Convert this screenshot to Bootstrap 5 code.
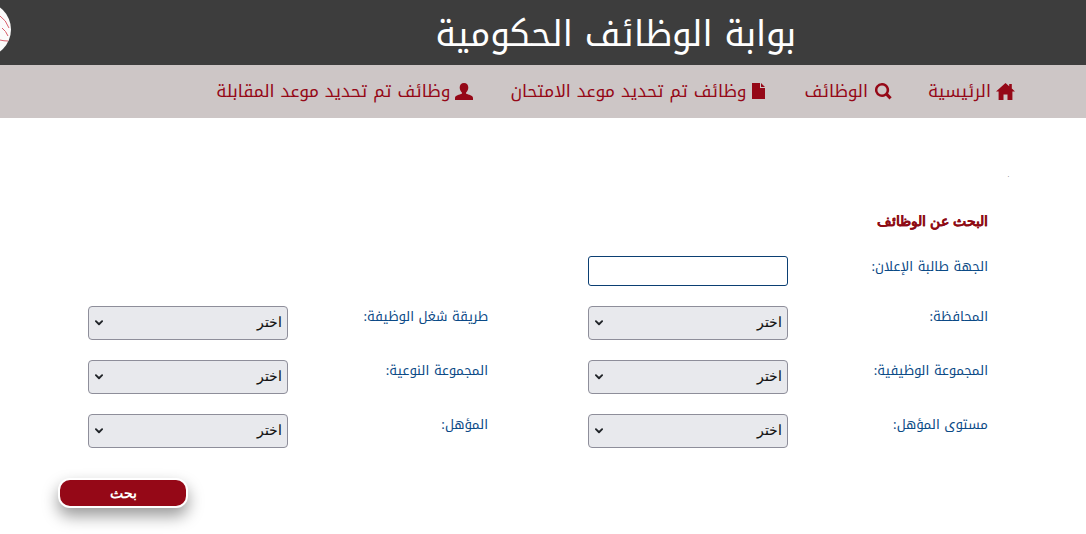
<!DOCTYPE html>
<html lang="ar" dir="rtl">
<head>
    <meta charset="utf-8">
    <title>بوابة الوظائف الحكومية</title>
    <link href="https://cdn.jsdelivr.net/npm/bootstrap@5.3.0/dist/css/bootstrap.min.css" rel="stylesheet">
    <style>
        body {
            font-family: "Noto Kufi Arabic", "DejaVu Sans", sans-serif;
            background: #fff;
            height: 534px;
            overflow: hidden;
        }
        .top-head {
            height: 65px;
            background: #3d3d3d;
            position: relative;
        }
        .top-head h1 {
            color: #fff;
            font-size: 35px;
            font-weight: 400;
            margin: 0;
            padding: 4px 290px 0 0;
            line-height: 61px;
        }
        .logo-circle {
            position: absolute;
            left: -44px;
            top: 2px;
            width: 55px;
            height: 55px;
        }
        .main-menu {
            height: 53px;
            background: #cdc6c6;
            padding-right: 71px;
            gap: 38px;
        }
        .main-menu a {
            color: #950817;
            font-size: 17.33px;
            text-decoration: none;
            display: flex;
            align-items: center;
            gap: 5px;
            white-space: nowrap;
        }
        .main-menu a:nth-child(1) {
            margin-left: -2px;
        }
        .main-menu a:nth-child(2) {
            gap: 7px;
            margin-left: 2px;
        }
        .main-menu a:nth-child(3) {
            margin-left: -1px;
        }
        .main-menu svg {
            fill: #950817;
            display: block;
        }
        .search-wrap {
            width: 900px;
            margin-right: 98px;
        }
        .stray-dot {
            height: 58px;
            font-size: 5px;
            line-height: 1;
            padding-top: 55px;
            margin-right: -21px;
            color: #333;
        }
        .search-title {
            color: #8e0b14;
            font-family: "Liberation Sans", sans-serif;
            font-size: 14px;
            font-weight: 700;
            -webkit-text-stroke: .15px #8e0b14;
            margin: 36px 0 0;
            line-height: 18px;
        }
        .form-line {
            display: flex;
            margin-top: 20px;
            height: 34px;
        }
        .first-line {
            margin-top: 26px;
            height: 30px;
        }
        .field-label {
            width: 200px;
            flex: none;
            color: #0b4a86;
            font-size: 13.33px;
            line-height: 22px;
            margin: 0;
        }
        .field-cell {
            width: 200px;
            flex: none;
        }
        .field-gap {
            width: 100px;
            flex: none;
        }
        .first-input {
            height: 30px;
            border: 1px solid #0b3f73;
            border-radius: 3px;
            padding: 0 8px;
        }
        .pick-box {
            height: 34px;
            background-color: #e8e9ed;
            background-image: url("data:image/svg+xml,%3csvg xmlns='http://www.w3.org/2000/svg' viewBox='0 0 16 16'%3e%3cpath fill='none' stroke='%23212529' stroke-linecap='round' stroke-linejoin='round' stroke-width='3' d='m3 5 5 5 5-5'/%3e%3c/svg%3e");
            border: 1px solid #8e8e9a;
            border-radius: 4px;
            color: #111;
            font-family: "Liberation Sans", sans-serif;
            font-size: 14px;
            -webkit-text-stroke: .1px #111;
            padding: 0 5px 2px 30px;
            background-position: left 5px center;
            background-size: 10px 10px;
        }
        .search-btn {
            width: 130px;
            height: 30px;
            margin: 30px 800px 0 0;
            display: block;
            background: #950817;
            color: #fff;
            border: 2px solid #fff;
            border-radius: 12px;
            font-family: "Liberation Sans", sans-serif;
            font-size: 14px;
            font-weight: 700;
            line-height: 1;
            padding: 0;
            box-shadow: 0 8px 16px rgba(0, 0, 0, .4);
        }
    </style>
</head>
<body>
    <header class="top-head">
        <h1>بوابة الوظائف الحكومية</h1>
        <svg class="logo-circle" viewBox="0 0 55 55">
            <circle cx="27.500" cy="27.500" r="27.500" fill="#fbfbfb"/>
            <path d="M44 14q6 4 9 12M46 26q4 3 6 8M44 38q4 1 8 1" fill="none" stroke="#d9606c" stroke-width="1"/>
        </svg>
    </header>

    <nav class="main-menu d-flex align-items-center">
        <a href="#">
            <svg width="19" height="17" viewBox="0 0 19 17"><path d="M9.500 0 0 8.500h2.600V17h4.900v-5.500h4V17h4.900V8.500H19L15.800 5.600V1h-2.600v2.200z"/></svg>
            الرئيسية
        </a>
        <a href="#">
            <svg width="17" height="17" viewBox="0 0 17 17"><path fill-rule="evenodd" d="M7 0a7 7 0 1 0 3.900 12.800l3.600 3.700 2.200-2.200-3.600-3.700A7 7 0 0 0 7 0zm0 2.400a4.600 4.600 0 1 1 0 9.200 4.600 4.600 0 0 1 0-9.200z"/></svg>
            الوظائف
        </a>
        <a href="#">
            <svg width="13" height="16" viewBox="0 0 13 16"><path d="M0 0h8v5h5v11H0zM9 0l4 4H9z"/></svg>
            وظائف تم تحديد موعد الامتحان
        </a>
        <a href="#">
            <svg width="18" height="17" viewBox="0 0 18 17"><path d="M9 0c2.800 0 4.300 2 4.300 4.600 0 2-.9 3.800-2.200 4.800v1.400c2.400.8 6.900 1.600 6.900 4.200v2H0v-2c0-2.600 4.500-3.400 6.900-4.200V9.400C5.600 8.400 4.700 6.600 4.700 4.600 4.700 2 6.200 0 9 0z"/></svg>
            وظائف تم تحديد موعد المقابلة
        </a>
    </nav>

    <main class="search-wrap">
        <div class="stray-dot">.</div>
        <h2 class="search-title">البحث عن الوظائف</h2>

        <div class="form-line first-line">
            <label class="field-label">الجهة طالبة الإعلان:</label>
            <div class="field-cell"><input type="text" class="form-control first-input"></div>
        </div>

        <div class="form-line">
            <label class="field-label">المحافظة:</label>
            <div class="field-cell"><select class="form-select pick-box"><option>اختر</option></select></div>
            <div class="field-gap"></div>
            <label class="field-label">طريقة شغل الوظيفة:</label>
            <div class="field-cell"><select class="form-select pick-box"><option>اختر</option></select></div>
        </div>

        <div class="form-line">
            <label class="field-label">المجموعة الوظيفية:</label>
            <div class="field-cell"><select class="form-select pick-box"><option>اختر</option></select></div>
            <div class="field-gap"></div>
            <label class="field-label">المجموعة النوعية:</label>
            <div class="field-cell"><select class="form-select pick-box"><option>اختر</option></select></div>
        </div>

        <div class="form-line">
            <label class="field-label">مستوى المؤهل:</label>
            <div class="field-cell"><select class="form-select pick-box"><option>اختر</option></select></div>
            <div class="field-gap"></div>
            <label class="field-label">المؤهل:</label>
            <div class="field-cell"><select class="form-select pick-box"><option>اختر</option></select></div>
        </div>

        <button class="search-btn" type="button">بحث</button>
    </main>

    <script src="https://cdn.jsdelivr.net/npm/bootstrap@5.3.0/dist/js/bootstrap.bundle.min.js"></script>
</body>
</html>
